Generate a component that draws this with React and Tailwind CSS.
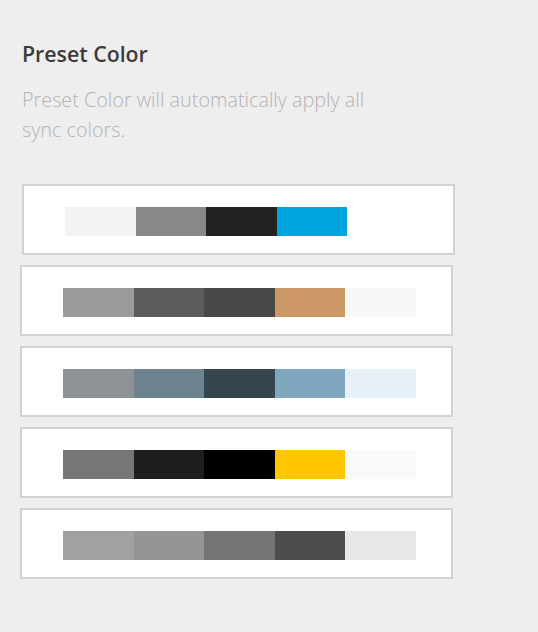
import React from 'react';

const presets = [
    { colors: ['#f3f3f3', '#888888', '#222222', '#00a4de'], shift: true },
    { colors: ['#9a9b9d', '#5c5c5c', '#484848', '#cb9866', '#f9f8f6'] },
    { colors: ['#8e9295', '#6d8390', '#36464e', '#81a7bf', '#e9f1f8'] },
    { colors: ['#767676', '#1e1e1e', '#000000', '#ffc600', '#f9f9f9'] },
    { colors: ['#a1a1a1', '#959595', '#747474', '#4d4d4d', '#e7e7e7'] },
];

function PresetRow({ colors, shift }) {
    return (
        <div className={`w-[433px] h-[71px] bg-white border-2 border-[#d2d2d2] flex items-start pt-[21px] pl-[41px] ${shift ? 'ml-[2px]' : ''}`}>
            <div className="flex">
                {colors.map((c, i) => (
                    <div key={i} className="w-[70.6px] h-[29px]" style={{ backgroundColor: c }} />
                ))}
            </div>
        </div>
    );
}

export default function App() {
    return (
        <div className="w-[538px] h-[632px] bg-[#eeeeee] px-[20px] pt-[40px]" style={{ fontFamily: '"Open Sans", sans-serif' }}>
            <h2 className="ml-[2px] text-[21.3px] font-semibold text-[#3b3b3b] leading-[28px]">Preset Color</h2>
            <p className="ml-[2px] mt-[17px] w-[370px] text-[19.8px] font-light text-[#b3b3b3] leading-[30px]">
                Preset Color will automatically apply all sync colors.
            </p>
            <div className="mt-[39px] flex flex-col gap-[10px]">
                {presets.map((p, i) => (
                    <PresetRow key={i} colors={p.colors} shift={p.shift} />
                ))}
            </div>
        </div>
    );
}
